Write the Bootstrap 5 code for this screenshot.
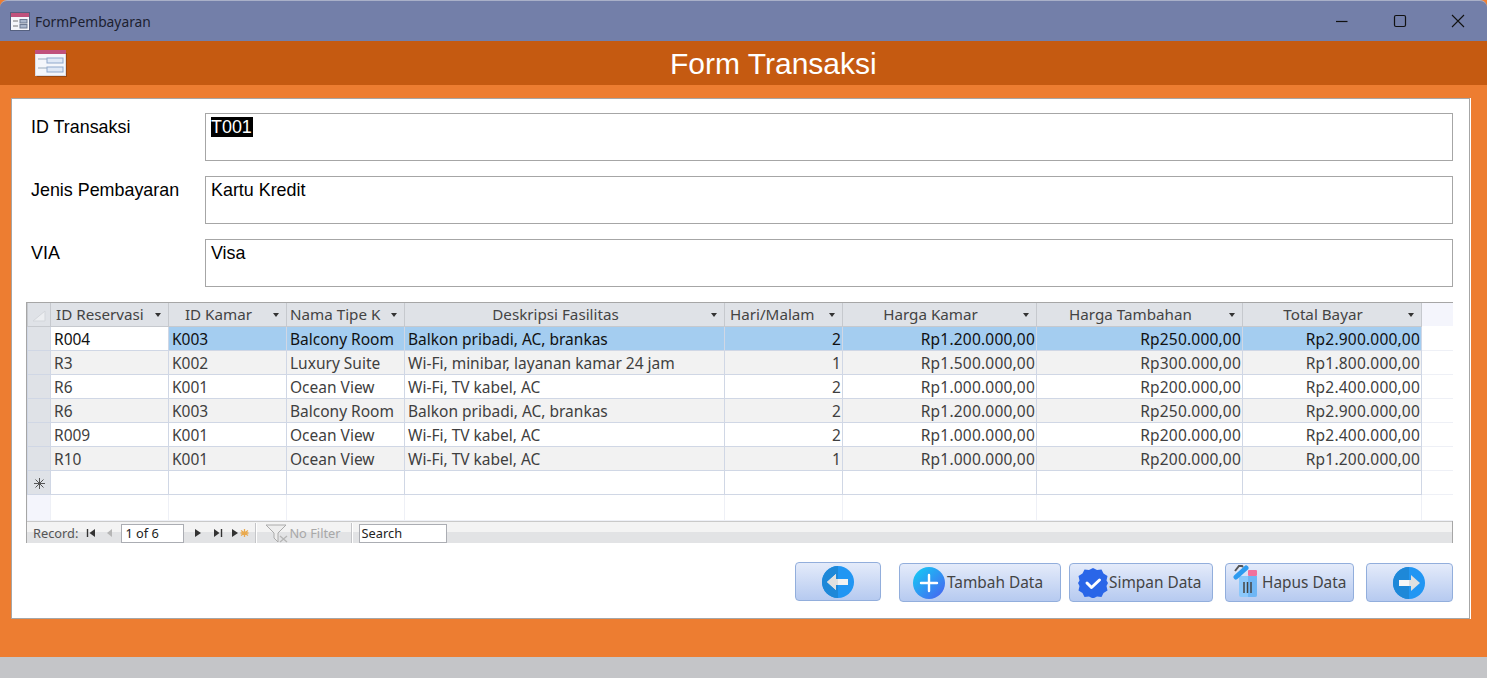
<!DOCTYPE html>
<html lang="en">
<head>
<meta charset="UTF-8">
<title>FormPembayaran</title>
<link href="https://cdn.jsdelivr.net/npm/bootstrap@5.3.0/dist/css/bootstrap.min.css" rel="stylesheet">
<style>
    html, body { height: 100%; }
    body { background: #ed7d31; overflow: hidden; font-family: "Liberation Sans", Arial, sans-serif; }
    .app-window { height: 678px; }
    .title-bar { height: 41px; background: #737fa9; border-top: 1px solid #a9b0c8; border-radius: 7px 7px 0 0; padding-left: 10px; color: #1c2130; font: 13.8px "Noto Sans", sans-serif; }
    .title-bar .win-name { margin-left: 5px; }
    .win-btn { width: 58px; height: 40px; }
    .form-head { height: 44px; background: #c55a11; color: #fff; font-size: 30px; }
    .form-head .head-icon { width: 34px; margin-left: 35px; }
    .form-head .head-title { margin-left: 601px; line-height: 45px; }
    .orange-area { padding: 13px 17px 0 11px; }
    .white-panel { height: 521px; background: #fff; border: 1px solid #a6a6a6; box-shadow: 1px 0 0 #fff; padding: 14px 16px 0 14px; }
    .field-row { height: 48px; margin-bottom: 15px; }
    .field-label { width: 179px; padding: 4px 0 0 5px; font-size: 17.9px; line-height: 20px; color: #000; }
    .field-box { flex: 1; border: 1px solid #a6a6a6; padding: 4px 5px; font-size: 17.9px; line-height: 19px; color: #000; }
    .field-box .picked { background: #000; color: #fff; padding: 0 1px 0 0; }
    .grid-wrap { border: 1px solid #a6a6a6; height: 241px; background: #fff; }
    .grid-table { table-layout: fixed; border-collapse: collapse; width: 1425px; margin: 0; font: 15.5px/20px "Noto Sans", sans-serif; color: #3f3f3f; }
    .grid-table th, .grid-table td { height: 24px; padding: 1px 1px 0 3px; border: 1px solid #d0d7e5; border-top: 0; white-space: nowrap; overflow: hidden; font-weight: 400; background: #fff; }
    .grid-table th { height: 23px; padding-top: 0; font-size: 15.2px; background: #dfe2e7; border-color: #c6c9ce; border-top: 0; text-align: center; color: #444; padding-right: 21px; position: relative; }
    .grid-table th.corner-head { padding: 0; }
    .grid-table th.left-head { text-align: left; padding-left: 5px; padding-right: 0; }
    .grid-table th.tight-head { text-align: left; padding-left: 3px; padding-right: 0; }
    .grid-table th.blank-head { background: #f4f5fc; border: 0; }
    .grid-table td.sel-cell { background: #dfe2e7; padding: 0; text-align: center; }
    .grid-table td.end-cell { border: 0; border-bottom: 1px solid #eef0f6; }
    .grid-table tr.alt td { background: #f2f2f2; }
    .grid-table tr.alt td.sel-cell { background: #dfe2e7; }
    .grid-table tr.alt td.end-cell { background: #fff; }
    .grid-table tr.cur td { background: #a4cdf0; color: #111; }
    .grid-table tr.cur td.first-cell { background: #fff; }
    .grid-table tr.cur td.sel-cell { background: #dfe2e7; }
    .grid-table tr.cur td.end-cell { background: #fff; }
    .grid-table tr.ghost td { height: 26px; border-color: #eef0f6; }
    .grid-table tr.ghost td.sel-cell { background: #f4f5fc; }
    .grid-table td.num { text-align: right; letter-spacing: .2px; }
    .drop-arrow { position: absolute; right: 7px; top: 10px; width: 0; height: 0; border: 3px solid transparent; border-top: 4px solid #333; border-bottom: 0; }
    .nav-strip { height: 22px; padding-top: 2px; background: linear-gradient(#f3f3f3 50%, #e2e3e5 50%); border-top: 1px solid #c9c9c9; font: 12.8px "Noto Sans", sans-serif; color: #555; padding-left: 6px; }
    .nav-strip svg { display: block; flex: none; }
    .gap-5px { margin-left: 5px; }
    .gap-7px { margin-left: 7px; }
    .gap-8px { margin-left: 8px; }
    .gap-9px { margin-left: 9px; }
    .gap-10px { margin-left: 10px; }
    .rec-box { width: 63px; height: 19px; border: 1px solid #abadb3; background: #fff; color: #222; padding-left: 3px; line-height: 17px; }
    .nav-sep { width: 2px; height: 20px; background: #c4c5c8; border-right: 1px solid #fff; }
    .search-box { width: 88px; height: 19px; margin-left: 6px; border: 1px solid #abadb3; background: #fff; color: #222; padding-left: 2px; line-height: 17px; }
    .faded { color: #a8a8a8; }
    .btn-row { margin-top: 20px; }
    .acc-btn { height: 39px; padding: 0; border: 1px solid #92aedc; border-radius: 4px; background: linear-gradient(#e4ebfa, #b6caf0); color: #444; font: 15.4px "Noto Sans", sans-serif; }
    .acc-btn span { padding-bottom: 1px; }
    .acc-btn:hover, .acc-btn:active { background: linear-gradient(#e4ebfa, #b6caf0) !important; border-color: #92aedc !important; color: #444 !important; }
    .btn-back { width: 86px; margin-top: -1px; margin-right: 18px; align-self: flex-start; }
    .btn-add { width: 162px; margin-right: 8px; }
    .btn-add svg { margin-left: 13px; margin-right: 2px; }
    .btn-save { width: 144px; margin-right: 12px; }
    .btn-save span { margin-left: 1px; }
    .btn-del { width: 129px; margin-right: 12px; }
    .btn-del svg { flex: none; margin-top: -5px; margin-left: 7px; margin-right: 3px; }
    .btn-next { width: 87px; padding-right: 2px; }
    .bottom-strip { height: 21px; background: #c4c5c8; }
</style>
</head>
<body>
<div class="app-window d-flex flex-column">
    <div class="title-bar d-flex align-items-center flex-shrink-0">
        <svg width="20" height="19" viewBox="0 0 20 19"><rect x=".5" y=".5" width="19" height="18" fill="#f5f6fa" stroke="#55607f"/><rect x="1" y="1" width="18" height="4" fill="#c0527c"/><path d="M3 9h5M3 14h5" stroke="#777"/><rect x="10" y="7.500" width="7" height="3.500" fill="#a9b6cc" stroke="#6d7a92"/><rect x="10" y="12.500" width="7" height="3.500" fill="#a9b6cc" stroke="#6d7a92"/></svg>
        <span class="win-name">FormPembayaran</span>
        <div class="ms-auto d-flex">
            <div class="win-btn d-flex align-items-center justify-content-center"><svg width="14" height="14"><path d="M1 7.500h11.500" stroke="#111" stroke-width="1.200"/></svg></div>
            <div class="win-btn d-flex align-items-center justify-content-center"><svg width="14" height="14"><rect x="1.500" y="1.500" width="11" height="11" rx="1.500" fill="none" stroke="#111" stroke-width="1.200"/></svg></div>
            <div class="win-btn d-flex align-items-center justify-content-center"><svg width="14" height="14"><path d="M1 1l12 12M13 1L1 13" stroke="#111" stroke-width="1.100"/></svg></div>
        </div>
    </div>
    <div class="form-head d-flex align-items-center flex-shrink-0">
        <svg class="head-icon" height="27" viewBox="0 0 34 27"><rect x="2" y="3" width="30" height="24" fill="#7a3a10" opacity=".6"/><rect x=".5" y=".5" width="30" height="25" fill="#f4f6fb" stroke="#d8dbe6"/><rect x="0" y="0" width="31" height="4" fill="#c0527c"/><path d="M3 9h11M3 18h11" stroke="#9ab" stroke-width="1"/><rect x="12" y="8" width="16" height="5" fill="#dfe8f6" stroke="#8fa8cc"/><rect x="12" y="17" width="16" height="5" fill="#dfe8f6" stroke="#8fa8cc"/></svg>
        <span class="head-title">Form Transaksi</span>
    </div>
    <div class="orange-area flex-grow-1">
        <div class="white-panel">
            <div class="field-row d-flex">
                <div class="field-label">ID Transaksi</div>
                <div class="field-box"><span class="picked">T001</span></div>
            </div>
            <div class="field-row d-flex">
                <div class="field-label">Jenis Pembayaran</div>
                <div class="field-box">Kartu Kredit</div>
            </div>
            <div class="field-row d-flex">
                <div class="field-label">VIA</div>
                <div class="field-box">Visa</div>
            </div>
            <div class="grid-wrap">
                <table class="grid-table">
                    <colgroup>
                        <col style="width:23px"><col style="width:118px"><col style="width:118px"><col style="width:118px"><col style="width:320px"><col style="width:118px"><col style="width:194px"><col style="width:206px"><col style="width:179px"><col style="width:31px">
                    </colgroup>
                    <thead>
                        <tr>
                            <th class="corner-head"><svg width="16" height="14" viewBox="0 0 16 14"><path d="M14 2v10H2z" fill="#eceef1" stroke="#d3d6db"/></svg></th>
                            <th class="left-head">ID Reservasi<span class="drop-arrow"></span></th>
                            <th>ID Kamar<span class="drop-arrow"></span></th>
                            <th class="tight-head">Nama Tipe K<span class="drop-arrow"></span></th>
                            <th>Deskripsi Fasilitas<span class="drop-arrow"></span></th>
                            <th class="left-head">Hari/Malam<span class="drop-arrow"></span></th>
                            <th>Harga Kamar<span class="drop-arrow"></span></th>
                            <th>Harga Tambahan<span class="drop-arrow"></span></th>
                            <th>Total Bayar<span class="drop-arrow"></span></th>
                            <th class="blank-head"></th>
                        </tr>
                    </thead>
                    <tbody id="gridBody"></tbody>
                </table>
                <div class="nav-strip d-flex align-items-center">
                    <span>Record:</span>
                    <svg class="gap-8px" width="10" height="10" viewBox="0 0 10 10"><path d="M1.500 1v8" stroke="#333" stroke-width="1.400"/><path d="M9 1v8L3.500 5z" fill="#333"/></svg>
                    <svg class="gap-8px" width="10" height="10" viewBox="0 0 10 10"><path d="M8 1v8L3 5z" fill="#b5b5b5"/></svg>
                    <div class="rec-box gap-7px">1 of 6</div>
                    <svg class="gap-9px" width="10" height="10" viewBox="0 0 10 10"><path d="M2 1v8l6-4z" fill="#333"/></svg>
                    <svg class="gap-10px" width="10" height="10" viewBox="0 0 10 10"><path d="M1 1v8l5.500-4z" fill="#333"/><path d="M8.500 1v8" stroke="#333" stroke-width="1.400"/></svg>
                    <svg class="gap-8px" width="19" height="10" viewBox="0 0 19 10"><path d="M1 1v8l6-4z" fill="#333"/><path d="M13.500 1v8M10 2.500l7 5M10 7.500l7-5M9.500 5h8" stroke="#e9a94e" stroke-width="1.300"/></svg>
                    <div class="nav-sep gap-5px"></div>
                    <svg class="gap-8px" width="24" height="19" viewBox="0 0 24 19"><path d="M1 1h20l-8 8v9l-4-4V9z" fill="#eee" stroke="#aaa"/><path d="M15 12l7 6M22 12l-7 6" stroke="#b5b5b5" stroke-width="1.300"/></svg>
                    <span class="faded">No Filter</span>
                    <div class="nav-sep gap-10px"></div>
                    <div class="search-box">Search</div>
                </div>
            </div>
            <div class="btn-row d-flex justify-content-end">
                <button class="btn acc-btn btn-back d-flex align-items-center justify-content-center" type="button">
                    <svg width="32" height="32" viewBox="0 0 32 32"><circle cx="16" cy="16" r="16" fill="#2196f3"/><path d="M16 0a16 16 0 0 0 0 32z" fill="#1e88d8"/><path d="M5 16l9-8v5h12v6H14v5z" fill="#f2f2f2"/><path d="M5 16l9 8v-5h2v-6h-2V8z" fill="#e0e0e0"/></svg>
                </button>
                <button class="btn acc-btn btn-add d-flex align-items-center" type="button">
                    <svg width="32" height="32" viewBox="0 0 32 32"><defs><linearGradient id="addFill" x1="0" y1="0" x2="1" y2="1"><stop offset="0" stop-color="#12d0f5"/><stop offset="1" stop-color="#4a5ff0"/></linearGradient></defs><circle cx="16" cy="16" r="16" fill="url(#addFill)"/><path d="M16 8v16M8 16h16" stroke="#fff" stroke-width="2.400" stroke-linecap="round"/></svg>
                    <span>Tambah Data</span>
                </button>
                <button class="btn acc-btn btn-save d-flex align-items-center" type="button">
                    <svg class="ms-2 flex-shrink-0" width="30" height="30" viewBox="0 0 30 30"><path d="M15 0l4 2 4.500-.5 2 4 4 2.500-1 4.500 1.500 2.500-1.500 3 1 4.500-4 2.500-2 4-4.500-.5-4 2-4-2-4.500.5-2-4-4-2.500 1-4.500L0 15l1.500-2.500-1-4.500 4-2.500 2-4L11 2z" fill="#2a66e8"/><path d="M9 15l4.500 4.500L21.500 12" fill="none" stroke="#fff" stroke-width="3" stroke-linecap="round" stroke-linejoin="round"/></svg>
                    <span>Simpan Data</span>
                </button>
                <button class="btn acc-btn btn-del d-flex align-items-center" type="button">
                    <svg width="26" height="33" viewBox="0 0 26 33"><path d="M6 12h18v19a2 2 0 0 1-2 2H8a2 2 0 0 1-2-2z" fill="#8cc8fb"/><path d="M15 12h9v19a2 2 0 0 1-2 2h-7z" fill="#6fb6f5"/><rect x="15" y="6" width="9" height="6" rx="1" fill="#f2709c"/><path d="M3 13L13 4" stroke="#2d9bf0" stroke-width="5" stroke-linecap="round"/><path d="M2 7L6 2h3l1 1" fill="none" stroke="#555" stroke-width="2"/><path d="M11 18v11M14.500 18v11M18 18v11" stroke="#444" stroke-width="1.500"/></svg>
                    <span>Hapus Data</span>
                </button>
                <button class="btn acc-btn btn-next d-flex align-items-center justify-content-center" type="button">
                    <svg width="32" height="32" viewBox="0 0 32 32"><circle cx="16" cy="16" r="16" fill="#2196f3"/><path d="M16 0a16 16 0 0 0 0 32z" fill="#1e88d8"/><path d="M6 13h10v6H6z" fill="#f7f7f7"/><path d="M16 13h2V8l9 8-9 8v-5h-2z" fill="#e0e0e0"/></svg>
                </button>
            </div>
        </div>
    </div>
    <div class="bottom-strip flex-shrink-0"></div>
</div>
<script>
    const rows = [
        ['R004', 'K003', 'Balcony Room', 'Balkon pribadi, AC, brankas', 2, 'Rp1.200.000,00', 'Rp250.000,00', 'Rp2.900.000,00'],
        ['R3', 'K002', 'Luxury Suite', 'Wi-Fi, minibar, layanan kamar 24 jam', 1, 'Rp1.500.000,00', 'Rp300.000,00', 'Rp1.800.000,00'],
        ['R6', 'K001', 'Ocean View', 'Wi-Fi, TV kabel, AC', 2, 'Rp1.000.000,00', 'Rp200.000,00', 'Rp2.400.000,00'],
        ['R6', 'K003', 'Balcony Room', 'Balkon pribadi, AC, brankas', 2, 'Rp1.200.000,00', 'Rp250.000,00', 'Rp2.900.000,00'],
        ['R009', 'K001', 'Ocean View', 'Wi-Fi, TV kabel, AC', 2, 'Rp1.000.000,00', 'Rp200.000,00', 'Rp2.400.000,00'],
        ['R10', 'K001', 'Ocean View', 'Wi-Fi, TV kabel, AC', 1, 'Rp1.000.000,00', 'Rp200.000,00', 'Rp1.200.000,00']
    ];
    let html = '';
    rows.forEach((r, i) => {
        const cls = i === 0 ? 'cur' : (i % 2 ? 'alt' : '');
        html += `<tr class="${cls}"><td class="sel-cell"></td><td class="first-cell">${r[0]}</td><td>${r[1]}</td><td>${r[2]}</td><td>${r[3]}</td>` +
            `<td class="num">${r[4]}</td><td class="num">${r[5]}</td><td class="num">${r[6]}</td><td class="num">${r[7]}</td><td class="end-cell"></td></tr>`;
    });
    html += '<tr><td class="sel-cell"><svg width="13" height="13" viewBox="0 0 13 13"><path d="M6.500 1v11M1 6.500h11M2.500 2.500l8 8M10.500 2.500l-8 8" stroke="#555"/></svg></td><td></td><td></td><td></td><td></td><td></td><td></td><td></td><td></td><td class="end-cell"></td></tr>';
    html += '<tr class="ghost"><td class="sel-cell"></td><td></td><td></td><td></td><td></td><td></td><td></td><td></td><td></td><td class="end-cell"></td></tr>';
    document.getElementById('gridBody').innerHTML = html;
</script>
<script src="https://cdn.jsdelivr.net/npm/bootstrap@5.3.0/dist/js/bootstrap.bundle.min.js"></script>
</body>
</html>
